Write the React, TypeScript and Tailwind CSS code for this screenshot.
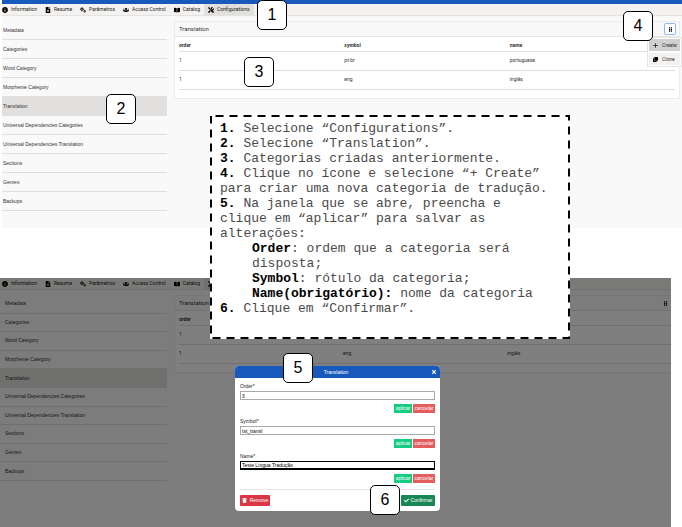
import React from "react";
import { FaInfoCircle, FaFileMedical, FaUsers, FaTools, FaPlus, FaClone, FaTrash, FaCheck, FaTimes, FaGripVertical } from "react-icons/fa";

function GearsIcon({ className }: { className?: string }) {
  return (
    <svg viewBox="0 0 24 24" fill="none" stroke="currentColor" className={className} aria-hidden="true">
      <circle cx="8" cy="9" r="4.5" strokeWidth="4" />
      <circle cx="8" cy="9" r="7" strokeWidth="2" strokeDasharray="3 2.5" />
      <circle cx="19" cy="17" r="2.5" strokeWidth="3.5" />
      <circle cx="19" cy="17" r="4.5" strokeWidth="1.5" strokeDasharray="2 1.5" />
    </svg>
  );
}

function BookIcon({ className }: { className?: string }) {
  return (
    <svg viewBox="0 0 24 24" fill="currentColor" className={className} aria-hidden="true">
      <path d="M0 4 Q6 2 11 5 V22 Q6 19 0 20Z" />
      <path d="M24 4 Q18 2 13 5 V22 Q18 19 24 20Z" />
    </svg>
  );
}

const tabs = [
  { label: "Information", Icon: FaInfoCircle },
  { label: "Resume", Icon: FaFileMedical },
  { label: "Parâmetros", Icon: GearsIcon },
  { label: "Access Control", Icon: FaUsers },
  { label: "Catalog", Icon: BookIcon },
  { label: "Configurations", Icon: FaTools },
];

const sections = [
  "Metadata",
  "Categories",
  "Word Category",
  "Morpheme Category",
  "Translation",
  "Universal Dependencies Categories",
  "Universal Dependencies Translation",
  "Sections",
  "Genres",
  "Backups",
];

const rows = [
  { order: "1", symbol: "pt-br", name: "portuguese" },
  { order: "1", symbol: "eng", name: "inglês" },
];

function TabBar({ className = "" }: { className?: string }) {
  return (
    <nav
      className={
        "flex h-3 items-stretch overflow-hidden border-b border-[#e4e3e1] bg-[#f3f2f0] text-[#222] " + className
      }
    >
      {tabs.map(({ label, Icon }) => (
        <button
          key={label}
          type="button"
          className={
            "flex shrink-0 items-center gap-[3px] px-1 text-[5px] leading-none first:pl-0 " +
            (label === "Configurations" ? "bg-[#e1e0de]" : "")
          }
        >
          <Icon className="size-1.5 text-black" />
          {label}
        </button>
      ))}
    </nav>
  );
}

function SideMenu({ className, itemClass }: { className: string; itemClass: string }) {
  return (
    <ul
      className={
        "grid shrink-0 auto-rows-fr font-['Liberation_Sans',sans-serif] text-[5px] leading-none " + className
      }
    >
      {sections.map((s) => (
        <li
          key={s}
          className={"flex items-center border-b border-[#dedede] " + (s === "Translation" ? "bg-[#e1e0de]" : "")}
        >
          <a href="#" className={itemClass}>
            {s}
          </a>
        </li>
      ))}
    </ul>
  );
}

function TranslationCard({
  action,
  className,
  bodyClass,
}: {
  action: React.ReactNode;
  className: string;
  bodyClass: string;
}) {
  return (
    <section className={"min-w-0 flex-1 self-start border-[#ececec] bg-white pb-2 " + className}>
      <header className="flex h-[15px] items-center justify-between border-b border-[#e6e6e6] bg-[#f8f8f8] pr-[3px] pl-1">
        <h2 className="text-[6px] leading-none">Translation</h2>
        {action}
      </header>
      <div className={bodyClass}>
        <table className="w-full table-fixed text-left text-[5px] leading-none">
          <thead>
            <tr className="h-[14px] border-b border-[#dedede]">
              <th className="pt-1 font-bold">order</th>
              <th className="pt-1 font-bold">symbol</th>
              <th className="pt-1 font-bold">name</th>
            </tr>
          </thead>
          <tbody>
            {rows.map((r) => (
              <tr key={r.name} className="h-[19px] border-b border-[#dedede]">
                <td>{r.order}</td>
                <td>{r.symbol}</td>
                <td>{r.name}</td>
              </tr>
            ))}
          </tbody>
        </table>
      </div>
    </section>
  );
}

function Badge({ n, className }: { n: number; className: string }) {
  return (
    <div
      className={
        "absolute z-20 flex size-[30px] items-center justify-center rounded-[5px] border border-black bg-white text-base leading-none text-black " +
        className
      }
    >
      {n}
    </div>
  );
}

function Field({ id, label, value, active }: { id: string; label: string; value: string; active?: boolean }) {
  return (
    <div className="flex h-[35px] flex-col">
      <label htmlFor={id} className="flex h-[10px] items-center text-[5px] leading-none">
        {label}
      </label>
      <input
        id={id}
        defaultValue={value}
        className={
          "h-[9px] w-full bg-white px-px text-[5px] leading-none text-black outline-none " +
          (active ? "border border-b-2 border-black" : "border border-[#a9a9a9]")
        }
      />
      <div className="mt-1 flex justify-end gap-px text-[5px] leading-none text-white">
        <button type="button" className="h-[9px] w-[18px] bg-[#13cb81]">
          aplicar
        </button>
        <button type="button" className="h-[9px] w-[22px] bg-[#e35d5f]">
          cancelar
        </button>
      </div>
    </div>
  );
}

function Dialog() {
  return (
    <div
      role="dialog"
      aria-label="Translation"
      className="absolute top-[88px] left-[235px] z-10 w-[205px] overflow-hidden rounded-sm bg-white font-['Liberation_Sans',sans-serif] text-[#222]"
    >
      <header className="grid h-3 grid-cols-[1fr_auto_1fr] items-center bg-[#1859bd] pr-[3px] text-[5px] leading-none text-white">
        <h2 className="col-start-2">Translation</h2>
        <button type="button" aria-label="Fechar" className="justify-self-end">
          <FaTimes className="size-1.5" />
        </button>
      </header>
      <div className="px-[5px] pt-[3px] pb-[5px]">
        <Field id="order" label="Order*" value="3" />
        <Field id="symbol" label="Symbol*" value="tst_transl" />
        <Field id="name" label="Name*" value="Teste Língua Tradução" active />
        <footer className="mt-[3px] flex justify-between border-t border-[#e4e4e4] pt-[5px] text-[5px] leading-none text-white">
          <button type="button" className="flex h-[11px] w-[30px] items-center justify-center gap-[3px] rounded-[1px] bg-[#dc3545]">
            <FaTrash className="size-[5px]" />
            Remove
          </button>
          <button type="button" className="flex h-[11px] w-[34px] items-center justify-center gap-0.5 rounded-[1px] bg-[#198754]">
            <FaCheck className="size-[5px]" />
            Confirmar
          </button>
        </footer>
      </div>
    </div>
  );
}

function Instructions() {
  return (
    <div className="absolute top-[115px] left-[210px] z-10 h-[224px] w-[360px] bg-white pt-[6px] pr-4 pl-2.5 font-['Liberation_Mono',monospace] text-[13px] leading-[15px] text-[#4a4a4a]">
      <svg className="absolute inset-0 size-full overflow-visible" viewBox="0 0 360 224" fill="none" aria-hidden="true">
        <rect x="1" y="1" width="358" height="222" stroke="#000" strokeWidth="2" strokeDasharray="8 6" strokeDashoffset="-4.5" />
      </svg>
      <ol className="relative [&_b]:text-black">
        <li><b>1.</b> Selecione “Configurations”.</li>
        <li><b>2.</b> Selecione “Translation”.</li>
        <li><b>3.</b> Categorias criadas anteriormente.</li>
        <li><b>4.</b> Clique no ícone e selecione “+ Create” para criar uma nova categoria de tradução.</li>
        <li>
          <b>5.</b> Na janela que se abre, preencha e clique em “aplicar” para salvar as alterações:
          <ul className="pl-8">
            <li><b>Order</b>: ordem que a categoria será disposta;</li>
            <li><b>Symbol</b>: rótulo da categoria;</li>
            <li><b>Name(obrigatório):</b> nome da categoria</li>
          </ul>
        </li>
        <li><b>6.</b> Clique em “Confirmar”.</li>
      </ol>
    </div>
  );
}

export default function App() {
  return (
    <main className="relative min-h-screen overflow-hidden bg-white font-[Roboto,sans-serif] text-[#333]">
      <div className="relative ml-0.5 bg-[#f9f9f9] pb-[17px]">
        <div className="h-1 bg-[#1859bd]" />
        <TabBar />
        <div className="flex gap-[7px] pt-[5px] pr-0.5">
          <SideMenu className="h-[190px] w-[165px]" itemClass="pl-px" />
          <TranslationCard
            className="border"
            bodyClass="px-1"
            action={
              <button
                type="button"
                aria-label="Opções"
                className="flex size-3 items-center justify-center rounded-xs border border-[#8fb8f0] bg-white"
              >
                <FaGripVertical className="size-[5px] text-black" />
              </button>
            }
          />
        </div>
        <div className="absolute top-[37px] right-0 z-10 flex w-[35px] flex-col gap-0.5 border border-[#e4e4e4] bg-white p-px text-[5px] leading-none">
          <button type="button" className="flex h-3 items-center gap-1 bg-[#d0d0d0] pl-1">
            <FaPlus className="size-[5px]" />
            Create
          </button>
          <button type="button" className="flex h-3 items-center gap-1 bg-[#f3f2f1] pl-1">
            <FaClone className="size-[5px] text-black" />
            Clone
          </button>
        </div>
      </div>

      <div className="relative mt-[50px] mr-[11px] bg-[#f9f9f9] pb-[46px]">
        <TabBar className="pl-0.5" />
        <div className="flex gap-[7px] pt-[5px]">
          <SideMenu className="h-[186px] w-[167px]" itemClass="pl-[5px]" />
          <TranslationCard
            className="border border-r-0"
            bodyClass="pl-1"
            action={
              <button type="button" aria-label="Opções">
                <FaGripVertical className="size-[5px] text-black" />
              </button>
            }
          />
        </div>
        <div className="absolute inset-0 bg-black/50" />
        <Dialog />
      </div>

      <Instructions />
      <div className="font-['Liberation_Sans',sans-serif]">
        <Badge n={1} className="top-0 left-[257px]" />
        <Badge n={2} className="top-[94px] left-[106px]" />
        <Badge n={3} className="top-[57px] left-[244px]" />
        <Badge n={4} className="top-[11px] left-[623px]" />
        <Badge n={5} className="top-[353px] left-[283px]" />
        <Badge n={6} className="top-[485px] left-[370px]" />
      </div>
    </main>
  );
}
